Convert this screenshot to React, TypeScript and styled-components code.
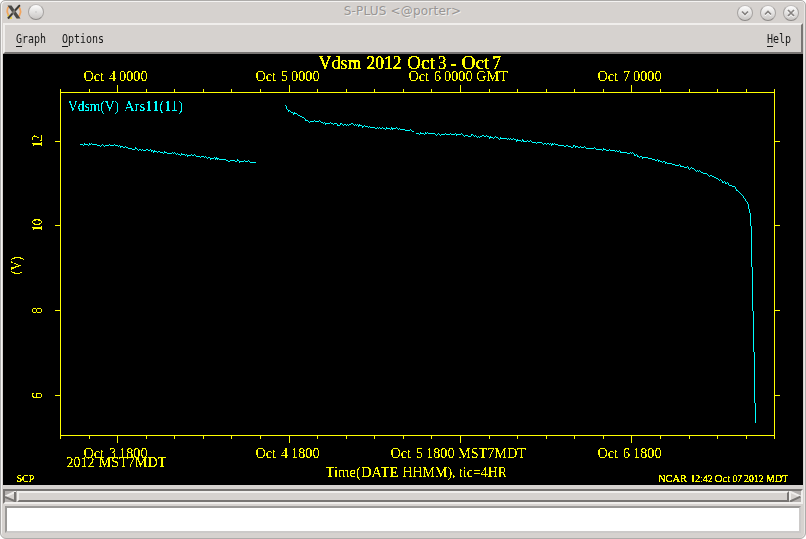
import React from "react";
import styled, { createGlobalStyle } from "styled-components";

const Global = createGlobalStyle`
  * { box-sizing: border-box; }
  html, body { margin: 0; padding: 0; background: #fff; overflow: hidden; }
`;

const Window = styled.div`
  width: 806px;
  height: 539px;
  display: flex;
  flex-direction: column;
  background: #d6d2cf;
  border: 1px solid #aeacaa;
  border-radius: 5px 5px 6px 6px;
  box-shadow: inset 1px 1px 0 #f4f3f2, inset -1px 0 0 #e8e6e4;
  padding: 0 2px;
`;

const TitleBar = styled.header`
  height: 22px;
  flex: none;
  display: grid;
  grid-template-columns: 45px 1fr 66px;
  align-items: center;
`;

const TitleIcons = styled.div`
  display: flex;
  align-items: center;
  gap: 6px;
  padding-left: 3px;
`;

const TitleText = styled.h1`
  margin: 0;
  padding-left: 20px;
  padding-top: 0;
  text-align: center;
  font: 400 12px/20px "DejaVu Sans", sans-serif;
  letter-spacing: 0.2px;
  color: #989593;
  text-shadow: 1px 1px 0 #efeeed;
  height: 22px;
`;

const TitleButtons = styled.div`
  display: flex;
  align-items: center;
  gap: 7px;
  padding-top: 1px;
  justify-content: flex-end;
  padding-right: 4px;
`;

const Round = styled.span`
  width: 16px;
  height: 16px;
  border-radius: 50%;
  border: 1px solid #a5a2a0;
  border-top-color: #c0bdbb;
  border-bottom-color: #8d8a88;
  background: linear-gradient(#fdfdfd, #c9c6c4);
  display: grid;
  place-items: center;
  svg { display: block; }
`;

const MenuBar = styled.nav`
  height: 31px;
  flex: none;
  display: flex;
  gap: 16px;
  padding: 7px 10.5px 0 10.5px;
  border-style: solid;
  border-width: 2px;
  border-color: #f0eeec #787573 #787573 #f0eeec;
`;

const MenuItem = styled.a<{ $chars: number; $end?: boolean }>`
  width: ${(p) => p.$chars * 6}px;
  margin-left: ${(p) => (p.$end ? "auto" : "0")};
  font: 400 11.5px/14px "DejaVu Sans Mono", monospace;
  color: #161616;
  white-space: nowrap;
  span {
    display: inline-block;
    transform: scaleX(0.867);
    transform-origin: 0 0;
  }
  u {
    text-decoration: none;
    box-shadow: 0 1px 0 #161616;
    display: inline-block;
    height: 14px;
  }
`;

const Chart = styled.svg`
  display: block;
  width: 800px;
  height: 431px;
  flex: none;
  background: #000;
  font-family: "Liberation Serif", "Times New Roman", serif;
`;

const ScrollBar = styled.div`
  height: 15px;
  flex: none;
  margin-top: 4px;
  display: flex;
  border-style: solid;
  border-width: 2px 2px 2px 2px;
  border-color: #787573 #f0eeec #f0eeec #787573;
  background: #b4b0ae;
`;

const Arrow = styled.svg`
  width: 12px;
  height: 11px;
  flex: none;
  display: block;
`;

const Thumb = styled.div`
  flex: 1;
  background: #d6d2cf;
  border-style: solid;
  border-width: 2px;
  border-color: #f0eeec #787573 #787573 #f0eeec;
`;

const Entry = styled.input`
  display: block;
  height: 27px;
  margin: 2px 2px 0 2px;
  padding: 0 4px;
  background: #fff;
  border-style: solid;
  border-width: 2px;
  border-color: #9b9997 #cccac9 #cccac9 #9b9997;
  outline: none;
`;

const YELLOW = "#ffff00";
const CYAN = "#00ffff";

type Word = [text: string, x: number, width: number];

const Words = ({ y, size = 14.5, color = YELLOW, weight = 0, parts }: {
  y: number; size?: number; color?: string; weight?: number; parts: Word[];
}) => (
  <text y={y} fontSize={size} fill={color} stroke={weight ? color : "none"} strokeWidth={weight}>
    {parts.map(([t, x, w], i) => (
      <tspan key={i} x={x} textLength={w} lengthAdjust="spacingAndGlyphs">{t}</tspan>
    ))}
  </text>
);

const dateLabel = (x: number, day: string, hour: string, zone?: [string, number]): Word[] => [
  ["Oct", x, 20.5],
  [day, x + 25.5, 7],
  [hour, x + 35.5, 28.5],
  ...(zone ? [[zone[0], x + 67.5, zone[1]] as Word] : []),
];

const series: [number, number][][] = [
  [[80, 144], [100, 144.6], [117, 145.3], [125, 147], [147, 150], [167, 152.6], [200, 156], [220, 159], [255, 162]],
  [[285, 105], [286, 108], [289, 111], [297, 114], [304, 118], [307, 121], [320, 121.4], [323, 123], [350, 124], [370, 126.7], [377, 128], [397, 128.4], [413, 130.5]],
  [[416, 132.6], [437, 133.6], [460, 134.3], [470, 135], [493, 137], [517, 139.7], [550, 143.7], [570, 145.7], [593, 148.3], [613, 150.2], [632, 153.4], [637, 155.8], [650, 158], [670, 163], [690, 168], [713, 176], [733, 186], [738, 191], [742, 195], [747, 203], [748, 208], [749, 212], [750, 216], [750, 225], [751, 227], [751, 266], [752, 310], [753, 351], [754, 402], [755, 406], [755, 422]],
];

/* Samples the curve at each column and adds one-pixel instrument noise;
   every column is drawn as a whole-pixel vertical run. */
const trace = (points: [number, number][]) => {
  let seed = 17;
  let prev: number | null = null;
  const out: string[] = [];
  const column = (x: number, y: number) => {
    const from = prev === null ? y : prev < y ? prev + 1 : prev > y ? prev - 1 : y;
    out.push(`M${x} ${Math.min(from, y)}h1V${Math.max(from, y) + 1}h-1z`);
    prev = y;
  };
  for (let i = 0; i < points.length - 1; i++) {
    const [x0, y0] = points[i];
    const [x1, y1] = points[i + 1];
    const n = Math.max(1, x1 - x0);
    for (let k = 0; k < n; k++) {
      seed = (seed * 1103515245 + 12345) % 2147483648;
      const r = seed / 2147483648;
      const noise = x0 > 733 ? 0 : r > 0.82 ? -1 : r < 0.14 ? 1 : 0;
      column(x0 + k, Math.round(y0 + ((y1 - y0) * k) / n) + noise);
    }
  }
  const [lx, ly] = points[points.length - 1];
  column(lx, Math.round(ly));
  return out.join("");
};

const ticks = Array.from({ length: 26 }, (_, i) => ({
  x: Math.round(60 + i * 28.57) + 0.5,
  major: i % 6 === 2,
}));

const VoltagePlot = () => (
  <Chart viewBox="3 54 800 431">
    <defs>
      <filter id="bitmap" x="0" y="0" width="100%" height="100%" colorInterpolationFilters="sRGB">
        <feComponentTransfer>
          <feFuncA type="discrete" tableValues="0 0 0 0 0 1 1 1 1 1" />
        </feComponentTransfer>
      </filter>
    </defs>
    <g fill="none" stroke={YELLOW} strokeWidth="1" shapeRendering="crispEdges">
      <rect x="60.5" y="92.5" width="714" height="343" />
      {ticks.map(({ x, major }) => (
        <path key={x} d={`M${x} ${major ? 85 : 89}V92M${x} 436V${major ? 443 : 439}`} />
      ))}
      {[141.5, 225.5, 310.5, 395.5].map((y) => (
        <path key={y} d={`M55 ${y}H60M775 ${y}H780`} />
      ))}
    </g>
    <g fill={CYAN} shapeRendering="crispEdges">
      {series.map((s, i) => <path key={i} d={trace(s)} />)}
    </g>
    <g filter="url(#bitmap)">
      <rect x="3" y="54" width="800" height="431" fill="none" />
      <Words y={69} size={18.5} weight={0.25} parts={[["Vdsm", 318.5, 43], ["2012", 366.5, 35], ["Oct", 407, 28], ["3", 438, 8.5], ["-", 450.5, 6], ["Oct", 461.5, 28], ["7", 492.5, 8.5]]} />
      <Words y={81} parts={dateLabel(83.5, "4", "0000")} />
      <Words y={81} parts={dateLabel(255.5, "5", "0000")} />
      <Words y={81} parts={dateLabel(408.5, "6", "0000", ["GMT", 32])} />
      <Words y={81} parts={dateLabel(597.5, "7", "0000")} />
      <Words y={111} color={CYAN} parts={[["Vdsm(V)", 68, 51], ["Ars11(11)", 124, 59]]} />
      <Words y={458} parts={dateLabel(83.5, "3", "1800")} />
      <Words y={458} parts={dateLabel(255.5, "4", "1800")} />
      <Words y={458} parts={dateLabel(390.5, "5", "1800", ["MST7MDT", 68])} />
      <Words y={458} parts={dateLabel(597.5, "6", "1800")} />
      <Words y={467} parts={[["2012", 66.5, 28], ["MST7MDT", 98.5, 68]]} />
      <Words y={477} parts={[["Time(DATE", 325.5, 73], ["HHMM),", 402.5, 53], ["tic=4HR", 459, 48]]} />
      <Words y={482} size={10.5} weight={0.2} parts={[["SCP", 16.5, 18]]} />
      <Words y={482} size={10.5} weight={0.2} parts={[["NCAR", 658, 29], ["12:42", 690.5, 22], ["Oct", 714.5, 16], ["07", 732.5, 9.5], ["2012", 744, 19.5], ["MDT", 766, 22.5]]} />
      <g fontSize="14" fill={YELLOW}>
        <text transform="translate(42 147.5) rotate(-90)" textLength="13">12</text>
        <text transform="translate(42 231.5) rotate(-90)" textLength="13">10</text>
        <text transform="translate(42 314) rotate(-90)">8</text>
        <text transform="translate(42 399) rotate(-90)">6</text>
        <text transform="translate(21 274.5) rotate(-90)" textLength="18" lengthAdjust="spacingAndGlyphs">(V)</text>
      </g>
    </g>
  </Chart>
);

const XLogo = () => (
  <svg width="16" height="16" viewBox="0 0 16 16">
    <path d="M3 2C0 6 1 11 5 14M12 2c4 4 3 9-1 12" fill="none" stroke="#f2a45c" strokeWidth="1.8" />
    <path d="M2 11c1 2 2 3 4 3" fill="none" stroke="#e8d23a" strokeWidth="2" />
    <path d="M1.5 1.5h4l9 13h-4z" fill="#4b4a47" />
    <path d="M13.5 1.5L2 14.5" stroke="#77746e" strokeWidth="2.6" />
    <path d="M14 1L9 6.5M6.5 9.5L2 14.5" stroke="#34332f" strokeWidth="1.2" />
  </svg>
);

const Glyph = ({ d }: { d: string }) => (
  <svg width="10" height="10" viewBox="0 0 10 10" fill="none" strokeWidth="1.7">
    <path d={d} stroke="#fff" transform="translate(0 1)" />
    <path d={d} stroke="#858280" />
  </svg>
);

export default function App() {
  return (
    <>
      <Global />
      <Window>
        <TitleBar>
          <TitleIcons>
            <XLogo />
            <Round><svg width="2" height="2"><circle cx="1" cy="1" r="0.7" fill="#bbb" /></svg></Round>
          </TitleIcons>
          <TitleText>S-PLUS &lt;@porter&gt;</TitleText>
          <TitleButtons>
            <Round><Glyph d="M2 3.5l3 3 3-3" /></Round>
            <Round><Glyph d="M2 6.5l3-3 3 3" /></Round>
            <Round><Glyph d="M2 2l6 6M8 2L2 8" /></Round>
          </TitleButtons>
        </TitleBar>
        <MenuBar>
          <MenuItem $chars={5}><span><u>G</u>raph</span></MenuItem>
          <MenuItem $chars={7}><span><u>O</u>ptions</span></MenuItem>
          <MenuItem $chars={4} $end><span><u>H</u>elp</span></MenuItem>
        </MenuBar>
        <VoltagePlot />
        <ScrollBar>
          <Arrow viewBox="0 0 12 11">
            <path d="M0 5.5L11 0V11z" fill="#d6d2cf" />
            <path d="M0 5.5L11 .5" stroke="#f0eeec" strokeWidth="2" />
            <path d="M0 6L10 10.2V1" fill="none" stroke="#787573" strokeWidth="2" />
          </Arrow>
          <Thumb />
          <Arrow viewBox="1 0 12 11">
            <path d="M2 0L13 5.5L2 11z" fill="#d6d2cf" />
            <path d="M13 5.5L2 .7V10" fill="none" stroke="#f0eeec" strokeWidth="2" />
            <path d="M2 10.5L12.5 5.7" stroke="#787573" strokeWidth="2" />
          </Arrow>
        </ScrollBar>
        <Entry aria-label="Command" />
      </Window>
    </>
  );
}
